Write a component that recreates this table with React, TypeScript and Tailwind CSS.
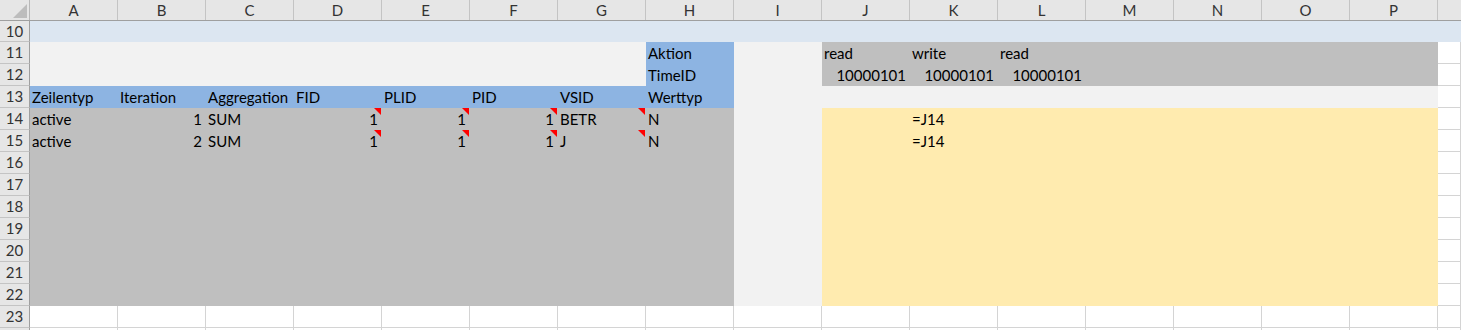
import React from "react";

type Cell = {
  v?: string;
  right?: boolean;
  note?: boolean;
};

const COLS = ["A", "B", "C", "D", "E", "F", "G", "H", "I", "J", "K", "L", "M", "N", "O", "P"];

const FILL = {
  sky: "bg-[#dce6f1] border-[#dce6f1]",
  blue: "bg-[#8db4e2] border-[#8db4e2]",
  light: "bg-[#f2f2f2] border-[#f2f2f2]",
  grey: "bg-[#bfbfbf] border-[#bfbfbf]",
  yellow: "bg-[#ffebaf] border-[#ffebaf]",
  white: "bg-white border-[#d4d4d4]",
};

type Fill = keyof typeof FILL;

// fill for row r, column index c (0 = A ... 15 = P, 16 = Q)
const fillFor = (r: number, c: number): Fill => {
  if (r === 10) return "sky";
  if (r >= 23 || c === 16) return "white";
  if (c === 8) return "light";
  if (r === 11 || r === 12) {
    if (c < 7) return "light";
    if (c === 7) return "blue";
    return "grey";
  }
  if (r === 13) return c <= 7 ? "blue" : "light";
  return c <= 7 ? "grey" : "yellow";
};

const data: Record<number, Record<number, Cell>> = {
  11: { 7: { v: "Aktion" }, 9: { v: "read" }, 10: { v: "write" }, 11: { v: "read" } },
  12: {
    7: { v: "TimeID" },
    9: { v: "10000101", right: true },
    10: { v: "10000101", right: true },
    11: { v: "10000101", right: true },
  },
  13: {
    0: { v: "Zeilentyp" },
    1: { v: "Iteration" },
    2: { v: "Aggregation" },
    3: { v: "FID" },
    4: { v: "PLID" },
    5: { v: "PID" },
    6: { v: "VSID" },
    7: { v: "Werttyp" },
  },
  14: {
    0: { v: "active" },
    1: { v: "1", right: true },
    2: { v: "SUM" },
    3: { v: "1", right: true, note: true },
    4: { v: "1", right: true, note: true },
    5: { v: "1", right: true, note: true },
    6: { v: "BETR", note: true },
    7: { v: "N" },
    10: { v: "=J14" },
  },
  15: {
    0: { v: "active" },
    1: { v: "2", right: true },
    2: { v: "SUM" },
    3: { v: "1", right: true, note: true },
    4: { v: "1", right: true, note: true },
    5: { v: "1", right: true, note: true },
    6: { v: "J", note: true },
    7: { v: "N" },
    10: { v: "=J14" },
  },
};

const ROWS = [10, 11, 12, 13, 14, 15, 16, 17, 18, 19, 20, 21, 22, 23, 24];

const NoteMark = () => (
  <svg className="absolute top-0 right-0" width="7" height="7" viewBox="0 0 7 7">
    <polygon points="0,0 7,0 7,7" fill="#ff0000" />
  </svg>
);

const SheetCell = ({ r, c, last }: { r: number; c: number; last?: boolean }) => {
  const cell = data[r]?.[c];
  const fill = FILL[fillFor(r, c)];
  return (
    <div
      className={`relative h-full border-r border-b flex items-end overflow-visible whitespace-nowrap ${fill} ${
        last ? "flex-1" : "w-[88px] shrink-0"
      } ${cell?.right ? "justify-end pr-[3px]" : "pl-[2px]"}`}
    >
      {cell?.v && <span className="relative z-10 leading-[20px]">{cell.v}</span>}
      {cell?.note && <NoteMark />}
    </div>
  );
};

export default function App() {
  return (
    <div
      className="w-[1461px] h-[330px] overflow-hidden bg-white text-[15px] text-black"
      style={{ fontFamily: "Lato, 'Liberation Sans', sans-serif" }}
    >
      {/* column header */}
      <div className="flex h-[21px] bg-[#e6e6e6] border-b border-[#9f9f9f]">
        <div className="relative w-[30px] shrink-0 border-r border-[#b8b8b8]">
          <svg className="absolute right-[2px] bottom-[2px]" width="14" height="14" viewBox="0 0 14 14">
            <polygon points="14,0 14,14 0,14" fill="#bdbdbd" />
          </svg>
        </div>
        {COLS.map((c) => (
          <div
            key={c}
            className="w-[88px] shrink-0 border-r border-[#c4c4c4] flex items-center justify-center text-[#333] leading-none"
          >
            {c}
          </div>
        ))}
        <div className="flex-1" />
      </div>

      {ROWS.map((r) => (
        <div key={r} className={`flex ${r === 10 ? "h-[21px]" : "h-[22px]"}`}>
          <div className="w-[30px] shrink-0 bg-[#e6e6e6] border-r border-b border-r-[#9f9f9f] border-b-[#c4c4c4] flex items-center justify-center text-[#333] leading-none">
            {r < 24 ? r : ""}
          </div>
          {COLS.map((_, c) => (
            <SheetCell key={c} r={r} c={c} />
          ))}
          <SheetCell r={r} c={16} last />
        </div>
      ))}
    </div>
  );
}
